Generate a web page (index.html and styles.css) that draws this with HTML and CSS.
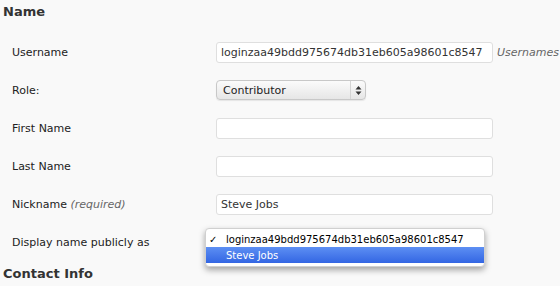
FILE: index.html
```html
<!DOCTYPE html>
<html lang="en">
<head>
<meta charset="UTF-8">
<title>Profile</title>
<link rel="stylesheet" href="styles.css">
</head>
<body>
    <div class="wrap">
        <h3 class="section_title">Name</h3>
        <div class="form_table">
            <div class="form_row">
                <label for="user_login">Username</label>
                <div class="field">
                    <input type="text" id="user_login" class="text_input" value="loginzaa49bdd975674db31eb605a98601c8547">
                    <span class="description">Usernames</span>
                </div>
            </div>
            <div class="form_row">
                <label for="role">Role:</label>
                <div class="field">
                    <div class="select_box" id="role">
                        <span>Contributor</span>
                        <span class="select_arrows">
                            <svg width="7" height="11" viewBox="0 0 7 11"><path d="M3.5 1 L6.5 4.5 H0.5 Z M3.5 10 L6.5 6.5 H0.5 Z" fill="#333"/></svg>
                        </span>
                    </div>
                </div>
            </div>
            <div class="form_row">
                <label for="first_name">First Name</label>
                <div class="field">
                    <input type="text" id="first_name" class="text_input" value="">
                </div>
            </div>
            <div class="form_row">
                <label for="last_name">Last Name</label>
                <div class="field">
                    <input type="text" id="last_name" class="text_input" value="">
                </div>
            </div>
            <div class="form_row">
                <label for="nickname">Nickname <span class="description">(required)</span></label>
                <div class="field">
                    <input type="text" id="nickname" class="text_input" value="Steve Jobs">
                </div>
            </div>
            <div class="form_row">
                <label for="display_name">Display name publicly as</label>
                <div class="field popup_anchor">
                    <ul class="select_popup" id="display_name">
                        <li class="popup_item"><span class="check">&#10003;</span>loginzaa49bdd975674db31eb605a98601c8547</li>
                        <li class="popup_item selected"><span class="check"></span>Steve Jobs</li>
                    </ul>
                </div>
            </div>
        </div>
        <h3 class="section_title contact">Contact Info</h3>
    </div>
</body>
</html>
```

FILE: styles.css
```css
*,
*::before,
*::after {
  box-sizing: border-box;
}
html, body {
    margin: 0;
    padding: 0;
    background: #f9f9f9;
    overflow: hidden;
}
body {
    font-family: "DejaVu Sans", sans-serif;
    font-size: 11px;
    color: #333;
    width: 560px;
    height: 286px;
}
.wrap {
    padding: 4px 0 0 3px;
}
.section_title {
    margin: 0;
    font-size: 13px;
    line-height: 16px;
    font-weight: bold;
    color: #333;
}
.section_title.contact {
    margin-top: 5px;
}
.form_table {
    margin-top: 13px;
}
.form_row {
    display: flex;
    align-items: center;
    height: 38px;
}
.form_row > label {
    flex: 0 0 213px;
    padding-left: 9px;
    color: #222;
}
.field {
    display: flex;
    align-items: center;
    flex: 0 0 auto;
    white-space: nowrap;
}
.description {
    font-style: italic;
    color: #666;
}
.text_input {
    flex: 0 0 277px;
    width: 277px;
    height: 21px;
    margin: 0;
    padding: 0 4px;
    border: 1px solid #dfdfdf;
    border-radius: 3px;
    background: #fff;
    font-family: inherit;
    font-size: 11px;
    color: #333;
    outline: none;
}
.field .description {
    margin-left: 4px;
}
.select_box {
    display: flex;
    align-items: center;
    justify-content: space-between;
    width: 150px;
    height: 20px;
    padding-left: 6px;
    border: 1px solid #c8c8c8;
    border-radius: 4px;
    background: linear-gradient(#fbfbfb, #e6e6e6);
    color: #222;
    box-shadow: 0 1px 1px rgba(0,0,0,.08);
}
.select_arrows {
    display: flex;
    align-items: center;
    justify-content: center;
    width: 15px;
    height: 100%;
    border-left: 1px solid #d4d4d4;
}
.popup_anchor {
    position: relative;
    width: 277px;
    height: 20px;
}
.select_popup {
    position: absolute;
    left: -11px;
    top: -4px;
    width: 280px;
    margin: 0;
    padding: 2px 0 3px;
    list-style: none;
    background: #fff;
    border: 1px solid #d0d0d0;
    border-radius: 4px;
    box-shadow: 0 3px 6px rgba(0,0,0,.35);
    font-size: 10px;
    color: #000;
}
.popup_item {
    display: flex;
    align-items: center;
    height: 16px;
}
.popup_item .check {
    display: inline-block;
    width: 20px;
    padding-left: 3px;
    font-weight: bold;
}
.popup_item.selected {
    background: linear-gradient(#5d8ff3, #3366e3);
    color: #fff;
}
```
